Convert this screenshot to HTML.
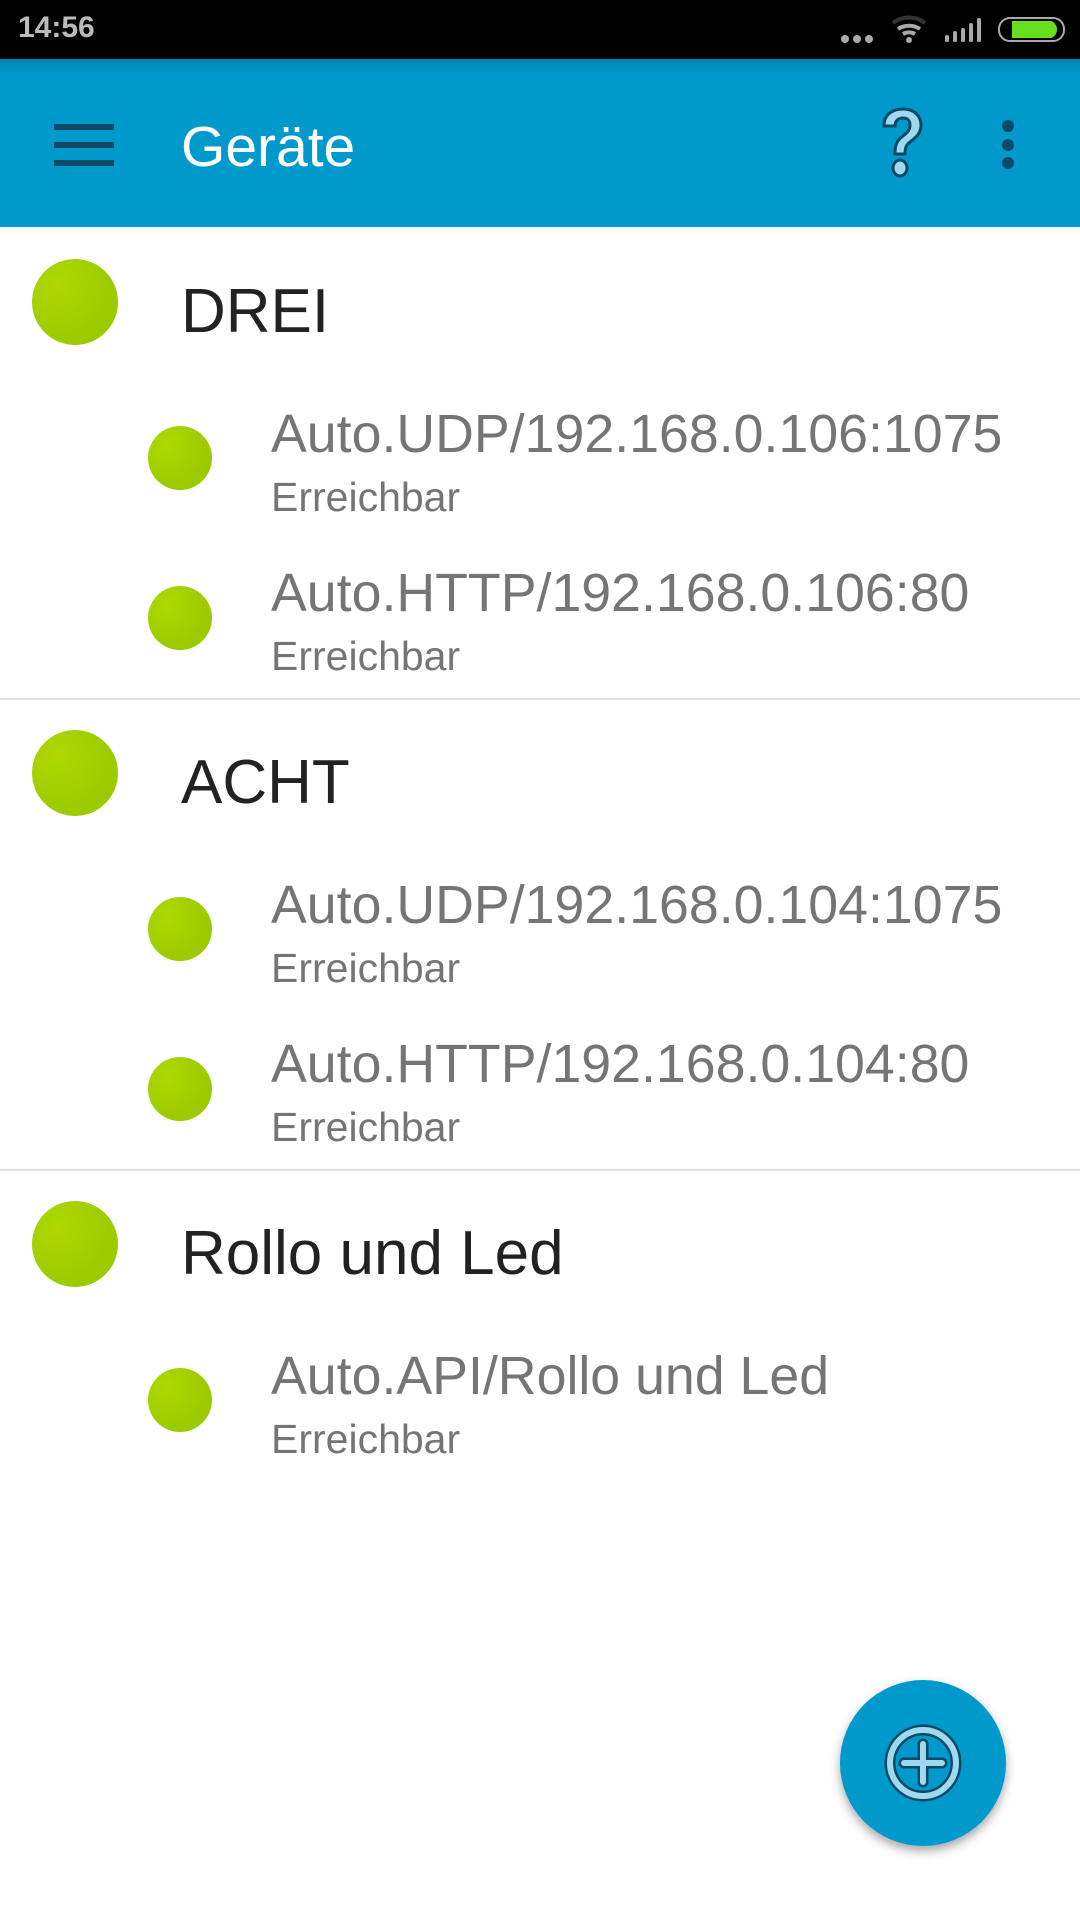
<!DOCTYPE html>
<html><head><meta charset="utf-8"><style>
*{margin:0;padding:0;box-sizing:border-box}
body{width:1080px;height:1920px;background:#fff;position:relative;overflow:hidden;font-family:"Liberation Sans",sans-serif}
.a{position:absolute;line-height:1.149;white-space:nowrap}
.bc{position:absolute;width:86px;height:86px;border-radius:50%;background:radial-gradient(circle at 30% 30%,#b0d800,#9ccc00 60%,#96c800);left:32px}
.sc{position:absolute;width:64px;height:64px;border-radius:50%;background:radial-gradient(circle at 30% 30%,#b0d800,#9ccc00 60%,#96c800);left:148px}
.h{font-size:62px;color:#222;left:181px}
.t{font-size:53.7px;color:#757575;left:271px}
.s{font-size:41px;color:#757575;left:271px}
.d{position:absolute;left:0;width:1080px;height:2px;background:#e0e0e0}
</style></head><body>
<div style="position:absolute;left:0;top:0;width:1080px;height:59px;background:#000"></div>
<div class="a" style="left:18px;top:11px;font-size:30px;font-weight:bold;color:#bbb">14:56</div>
<svg style="position:absolute;left:840px;top:0" width="240" height="60">
<circle cx="5" cy="39" r="4" fill="#aaa"/><circle cx="17" cy="39" r="4" fill="#aaa"/><circle cx="29" cy="39" r="4" fill="#aaa"/>
<path d="M53 23 A26 26 0 0 1 85 23" stroke="#333" stroke-width="4" fill="none"/>
<path d="M58 29 A20 20 0 0 1 80 29" stroke="#aaa" stroke-width="4" fill="none"/>
<path d="M63 34 A12 12 0 0 1 75 34" stroke="#aaa" stroke-width="4" fill="none"/>
<circle cx="69" cy="40" r="3" fill="#aaa"/>
<rect x="105" y="35" width="4" height="7" rx="2" fill="#aaa"/><rect x="113" y="31" width="4" height="11" rx="2" fill="#aaa"/><rect x="121" y="28" width="4" height="14" rx="2" fill="#aaa"/><rect x="129" y="23" width="4" height="19" rx="2" fill="#aaa"/><rect x="137" y="18" width="4" height="24" rx="2" fill="#aaa"/>
<rect x="159" y="18" width="65" height="23" rx="11" fill="none" stroke="#aaa" stroke-width="2"/>
<path d="M172 21 H211 A9 9 0 0 1 211 38 H172 Z" fill="#66e01a"/>
</svg>
<div style="position:absolute;left:0;top:59px;width:1080px;height:168px;background:linear-gradient(#0084b0,#0099cc 16px,#0099cc)"></div>
<div style="position:absolute;left:54px;top:124px;width:60px;height:6px;background:#0b4a66"></div>
<div style="position:absolute;left:54px;top:142px;width:60px;height:6px;background:#0b4a66"></div>
<div style="position:absolute;left:54px;top:160px;width:60px;height:6px;background:#0b4a66"></div>
<div class="a" style="left:181px;top:115px;font-size:57px;color:#fff">Geräte</div>
<svg style="position:absolute;left:876px;top:106px" width="50" height="76" viewBox="0 0 50 76">
<path d="M8 20 C8 6 20 3 27 3 C38 3 45 10 45 19 C45 28 39 32 34 36 C30 39 29 42 29 48 H19 C19 40 20 35 27 30 C32 26 34 24 34 19 C34 14 31 12 27 12 C22 12 19 15 19 20 Z" fill="#9fd8ef" stroke="#0b4a66" stroke-width="3"/>
<ellipse cx="24" cy="62" rx="7" ry="8" fill="#9fd8ef" stroke="#0b4a66" stroke-width="3"/>
</svg>
<div style="position:absolute;left:1002px;top:120px;width:12px;height:12px;border-radius:50%;background:#0b4a66"></div>
<div style="position:absolute;left:1002px;top:139px;width:12px;height:12px;border-radius:50%;background:#0b4a66"></div>
<div style="position:absolute;left:1002px;top:157px;width:12px;height:12px;border-radius:50%;background:#0b4a66"></div>

<div class="bc" style="top:259px"></div><div class="a h" style="top:276px">DREI</div>
<div class="sc" style="top:426px"></div><div class="a t" style="top:404px">Auto.UDP/192.168.0.106:1075</div><div class="a s" style="top:474px">Erreichbar</div>
<div class="sc" style="top:586px"></div><div class="a t" style="top:563px">Auto.HTTP/192.168.0.106:80</div><div class="a s" style="top:633px">Erreichbar</div>
<div class="d" style="top:698px"></div>

<div class="bc" style="top:730px"></div><div class="a h" style="top:747px">ACHT</div>
<div class="sc" style="top:897px"></div><div class="a t" style="top:875px">Auto.UDP/192.168.0.104:1075</div><div class="a s" style="top:945px">Erreichbar</div>
<div class="sc" style="top:1057px"></div><div class="a t" style="top:1034px">Auto.HTTP/192.168.0.104:80</div><div class="a s" style="top:1104px">Erreichbar</div>
<div class="d" style="top:1169px"></div>

<div class="bc" style="top:1201px"></div><div class="a h" style="top:1218px">Rollo und Led</div>
<div class="sc" style="top:1368px"></div><div class="a t" style="top:1346px">Auto.API/Rollo und Led</div><div class="a s" style="top:1416px">Erreichbar</div>

<div style="position:absolute;left:840px;top:1680px;width:166px;height:166px;border-radius:50%;background:#0099cc;box-shadow:0 5px 10px rgba(0,0,0,.35)"></div>
<svg style="position:absolute;left:883px;top:1723px" width="80" height="80" viewBox="0 0 80 80">
<circle cx="40" cy="40" r="33" fill="none" stroke="#0b4a66" stroke-width="11"/>
<circle cx="40" cy="40" r="33" fill="none" stroke="#9fd8ef" stroke-width="6"/>
<path d="M40 21 V59 M21 40 H59" stroke="#0b4a66" stroke-width="11" stroke-linecap="round"/>
<path d="M40 21 V59 M21 40 H59" stroke="#9fd8ef" stroke-width="6" stroke-linecap="round"/>
</svg>
</body></html>
